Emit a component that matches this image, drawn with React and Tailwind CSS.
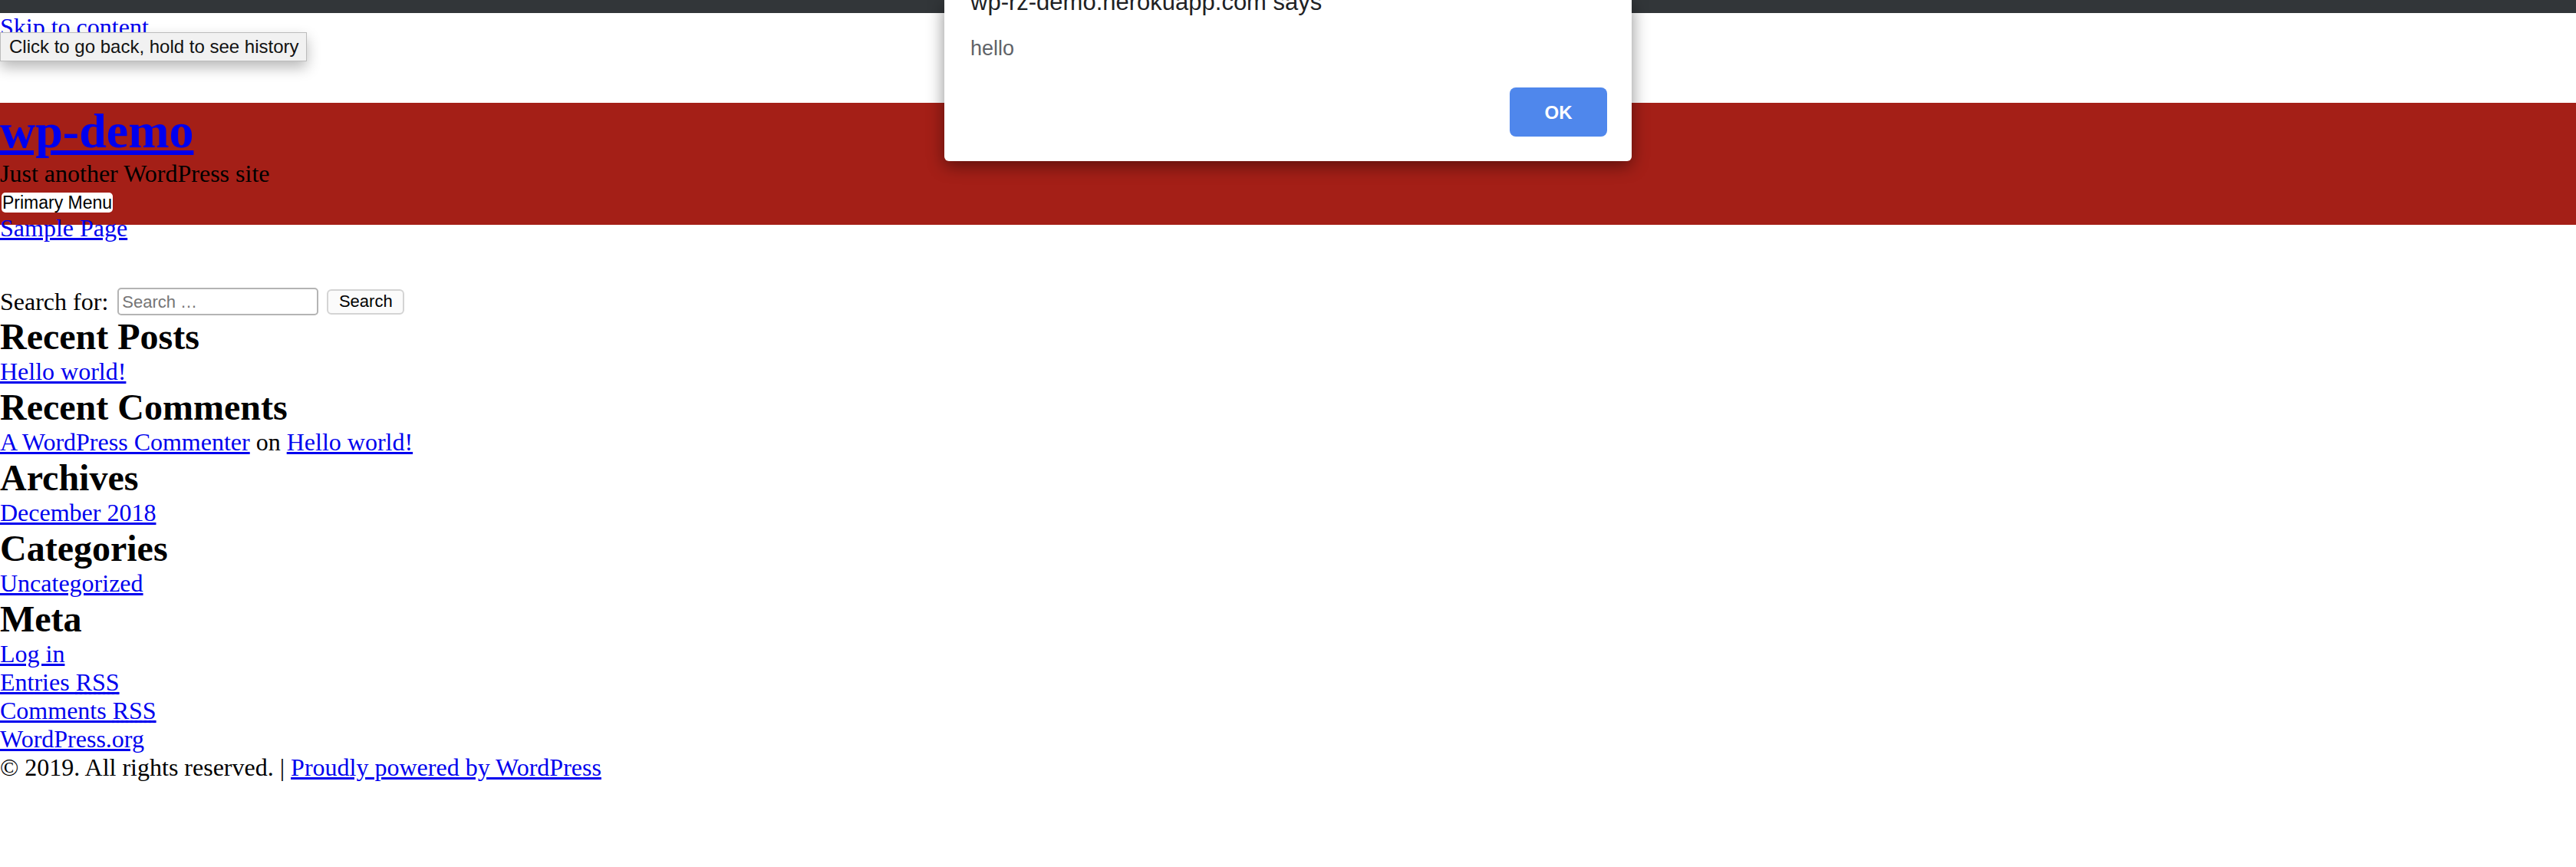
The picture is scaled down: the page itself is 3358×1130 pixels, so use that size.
export default function App() {
  const link = "text-[#0000ee] underline";
  return (
    <div className="relative min-h-[1130px] w-full overflow-hidden bg-white font-['Liberation_Serif','Times_New_Roman',serif] text-[32px] leading-[37px] text-black">
      <div className="h-[17px] bg-[#323639]" />
      <a href="#content" className={`block w-max ${link}`}>Skip to content</a>

      <header className="mt-[80px] h-[159px] bg-[#a41f17]">
        <h1 className="text-[64px] font-bold leading-[74px]">
          <a href="#" className={link}>wp-demo</a>
        </h1>
        <p>Just another WordPress site</p>
        <button className="mt-[6px] ml-[2px] flex h-[26px] items-center rounded-[5px] bg-white px-[1px] font-['Liberation_Sans',Arial,sans-serif] text-[23px] leading-[26px] text-black">
          Primary Menu
        </button>
        <nav className="mt-[2px]">
          <a href="#" className={link}>Sample Page</a>
        </nav>
      </header>

      <form className="mt-[82px] flex h-[36px] items-center">
        <label className="flex items-center">
          <span>Search for:</span>
          <input
            type="search"
            placeholder="Search …"
            className="ml-[12px] h-[36px] w-[262px] rounded-[5px] border-2 border-[#b4b4b4] bg-white px-[4px] font-['Liberation_Sans',Arial,sans-serif] text-[22px] text-black placeholder:text-[#757575]"
          />
        </label>
        <button
          type="button"
          className="ml-[11px] h-[33px] w-[101px] rounded-[6px] border-2 border-[#d4d4d4] bg-[#fbfbfb] font-['Liberation_Sans',Arial,sans-serif] text-[22px] leading-[28px] text-black"
        >
          Search
        </button>
      </form>

      <section>
        <h2 className="text-[48px] font-bold leading-[55px]">Recent Posts</h2>
        <div><a href="#" className={link}>Hello world!</a></div>
      </section>
      <section>
        <h2 className="text-[48px] font-bold leading-[55px]">Recent Comments</h2>
        <div>
          <a href="#" className={link}>A WordPress Commenter</a> on{" "}
          <a href="#" className={link}>Hello world!</a>
        </div>
      </section>
      <section>
        <h2 className="text-[48px] font-bold leading-[55px]">Archives</h2>
        <div><a href="#" className={link}>December 2018</a></div>
      </section>
      <section>
        <h2 className="text-[48px] font-bold leading-[55px]">Categories</h2>
        <div><a href="#" className={link}>Uncategorized</a></div>
      </section>
      <section>
        <h2 className="text-[48px] font-bold leading-[55px]">Meta</h2>
        <div><a href="#" className={link}>Log in</a></div>
        <div>
          <a href="#" className={link}>
            Entries <abbr title="Really Simple Syndication">RSS</abbr>
          </a>
        </div>
        <div>
          <a href="#" className={link}>
            Comments <abbr title="Really Simple Syndication">RSS</abbr>
          </a>
        </div>
        <div><a href="#" className={link}>WordPress.org</a></div>
      </section>
      <footer>
        © 2019. All rights reserved. |{" "}
        <a href="#" className={link}>Proudly powered by WordPress</a>
      </footer>

      {/* Back-button tooltip */}
      <div className="absolute left-0 top-[42px] flex h-[38px] w-[400px] items-center border border-[#bcbcbc] bg-[#f1f1f1] pl-[11px] font-['Liberation_Sans',Arial,sans-serif] text-[24px] leading-[28px] text-[#111] shadow-[0_8px_18px_rgba(0,0,0,0.28)]">
        Click to go back, hold to see history
      </div>

      {/* Alert dialog */}
      <div className="absolute left-[1231px] top-0 flex h-[210px] w-[896px] flex-col rounded-b-[6px] bg-white pl-[34px] pr-[32px] font-['Liberation_Sans',Arial,sans-serif] shadow-[0_6px_22px_rgba(0,0,0,0.45)]">
        <div className="-mt-[15px] text-[31px] leading-[36px] text-[#202124]">wp-rz-demo.herokuapp.com says</div>
        <div className="mt-[26px] text-[27px] leading-[32px] text-[#5f6368]">hello</div>
        <div className="mt-auto mb-[32px] flex justify-end">
          <button className="flex h-[64px] w-[127px] items-center justify-center rounded-[8px] bg-[#4f87ec] text-[24px] font-bold text-white">
            OK
          </button>
        </div>
      </div>
    </div>
  );
}
